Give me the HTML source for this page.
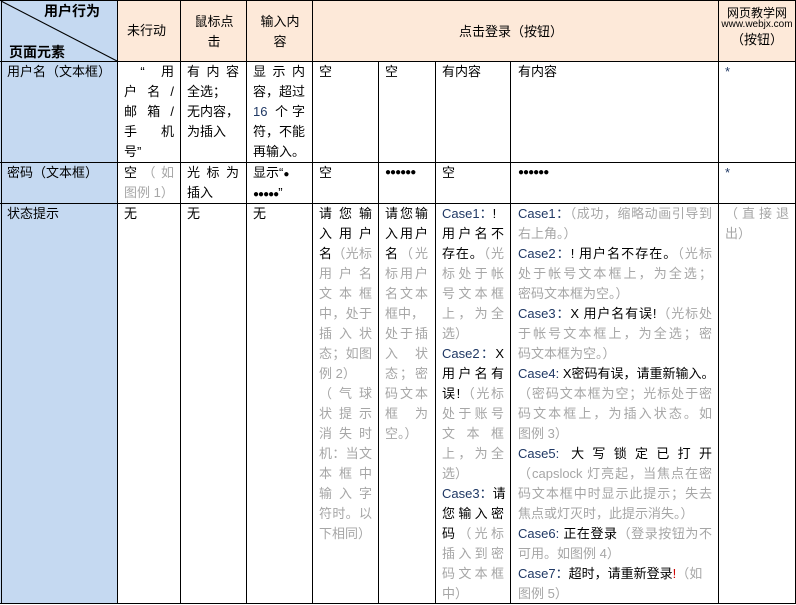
<!DOCTYPE html>
<html><head><meta charset="utf-8"><style>
*{margin:0;padding:0;box-sizing:border-box}
body{width:796px;height:605px;background:#fff;position:relative;overflow:hidden;font-family:"Liberation Sans","Noto Sans CJK SC","WenQuanYi Zen Hei",sans-serif;font-size:13px;color:#000}
.bg{position:absolute}
.h{position:absolute;background:#000}
.c{position:absolute;line-height:20px}
.c div{white-space:nowrap;height:20px}
.j{text-align:justify;text-align-last:justify}
.g{color:#a6a6a6}
.b{color:#1f3864}
.d{font-size:10px;letter-spacing:-1px}
</style></head><body>
<div class="bg" style="left:0;top:0;width:796px;height:61px;background:#fde9d9"></div>
<div class="bg" style="left:0;top:0;width:117px;height:604px;background:#c5d9f1"></div>
<svg style="position:absolute;left:0;top:0" width="118" height="62"><line x1="1" y1="1" x2="117" y2="61" stroke="#000" stroke-width="1"/></svg>
<div class="h" style="left:0;top:0;width:796px;height:1px"></div>
<div class="h" style="left:0;top:61px;width:796px;height:1px"></div>
<div class="h" style="left:0;top:162px;width:796px;height:1px"></div>
<div class="h" style="left:0;top:203px;width:796px;height:1px"></div>
<div class="h" style="left:0;top:603px;width:796px;height:1px"></div>
<div class="h" style="left:1px;top:0;width:1px;height:604px"></div>
<div class="h" style="left:117px;top:0;width:1px;height:604px"></div>
<div class="h" style="left:180px;top:0;width:1px;height:604px"></div>
<div class="h" style="left:246px;top:0;width:1px;height:604px"></div>
<div class="h" style="left:312px;top:0;width:1px;height:604px"></div>
<div class="h" style="left:378px;top:61px;width:1px;height:543px"></div>
<div class="h" style="left:435px;top:61px;width:1px;height:543px"></div>
<div class="h" style="left:510px;top:61px;width:1px;height:543px"></div>
<div class="h" style="left:718px;top:0;width:1px;height:604px"></div>
<div class="h" style="left:795px;top:0;width:1px;height:604px"></div>

<div class="c" style="left:44px;top:1px;font-weight:bold;font-size:14px">用户行为</div>
<div class="c" style="left:9px;top:42px;font-weight:bold;font-size:14px">页面元素</div>
<div class="c" style="left:127px;top:21px">未行动</div>
<div class="c" style="left:193px;top:12px;text-align:center;width:42px"><div>鼠标点</div><div>击</div></div>
<div class="c" style="left:259px;top:12px;text-align:center;width:42px"><div>输入内</div><div>容</div></div>
<div class="c" style="left:459px;top:22px">点击登录（按钮）</div>
<div class="c" style="left:719px;top:8px;width:76px;text-align:center;font-size:12px;line-height:11px"><div style="height:11px">网页教学网</div><div style="height:11px;font-size:10px">www.webjx.com</div></div>
<div class="c" style="left:719px;top:30px;width:76px;text-align:center">（按钮）</div>

<div class="c" style="left:7px;top:62px">用户名（文本框）</div>
<div class="c" style="left:124px;top:62px;width:50px"><div class="j">&nbsp;“&nbsp;用</div><div class="j">户 名 /</div><div class="j">邮 箱 /</div><div class="j">手 机</div><div>号”</div></div>
<div class="c" style="left:187px;top:62px;width:52px"><div class="j">有内容</div><div>全选；</div><div>无内容，</div><div>为插入</div></div>
<div class="c" style="left:253px;top:62px;width:52px"><div class="j">显示内</div><div class="j">容，超过</div><div class="j"><span class="b">16</span> 个字</div><div class="j">符，不能</div><div>再输入。</div></div>
<div class="c" style="left:319px;top:62px">空</div>
<div class="c" style="left:385px;top:62px">空</div>
<div class="c" style="left:442px;top:62px">有内容</div>
<div class="c" style="left:518px;top:62px">有内容</div>
<div class="c b" style="left:725px;top:62px">*</div>

<div class="c" style="left:7px;top:163px">密码（文本框）</div>
<div class="c" style="left:124px;top:163px;width:50px"><div class="j">空<span class="g">（如</span></div><div class="g">图例 1）</div></div>
<div class="c" style="left:187px;top:163px;width:52px"><div class="j">光标为</div><div>插入</div></div>
<div class="c" style="left:253px;top:163px;width:52px"><div>显示“<span class="d">●</span></div><div><span class="d">●●●●●</span>”</div></div>
<div class="c" style="left:319px;top:163px">空</div>
<div class="c d" style="left:385px;top:163px">●●●●●●</div>
<div class="c" style="left:442px;top:163px">空</div>
<div class="c d" style="left:518px;top:163px">●●●●●●</div>
<div class="c b" style="left:725px;top:163px">*</div>

<div class="c" style="left:7px;top:204px">状态提示</div>
<div class="c" style="left:124px;top:204px">无</div>
<div class="c" style="left:187px;top:204px">无</div>
<div class="c" style="left:253px;top:204px">无</div>
<div class="c" style="left:319px;top:204px;width:53px">
<div class="j">请您输</div><div class="j">入用户</div><div class="j">名<span class="g">（光标</span></div>
<div class="j g">用户名</div><div class="j g">文本框</div><div class="j g">中，处于</div><div class="j g">插入状</div><div class="j g">态；如图</div><div class="g">例 2）</div>
<div class="j g">（气球</div><div class="j g">状提示</div><div class="j g">消失时</div><div class="j g">机：当文</div><div class="j g">本框中</div><div class="j g">输入字</div><div class="j g">符时。以</div><div class="g">下相同）</div></div>
<div class="c" style="left:385px;top:204px;width:43px">
<div class="j">请您输</div><div class="j">入用户</div><div class="j">名<span class="g">（光</span></div>
<div class="j g">标用户</div><div class="j g">名文本</div><div class="g">框中，</div><div class="j g">处于插</div><div class="j g">入 状</div><div class="j g">态；密</div><div class="j g">码文本</div><div class="j g">框 为</div><div class="g">空。）</div></div>
<div class="c" style="left:442px;top:204px;width:62px">
<div><span class="b">Case1：</span>!</div><div class="j">用户名不</div><div class="j">存在。<span class="g">（光</span></div>
<div class="j g">标处于帐</div><div class="j g">号文本框</div><div class="j g">上，为全</div><div class="g">选）</div>
<div class="j"><span class="b">Case2：</span>X</div><div class="j">用户名有</div><div class="j">误!<span class="g">（光标</span></div>
<div class="j g">处于账号</div><div class="j g">文本框</div><div class="j g">上，为全</div><div class="g">选）</div>
<div class="j"><span class="b">Case3：</span>请</div><div class="j">您输入密</div><div class="j">码<span class="g">（光标</span></div>
<div class="j g">插入到密</div><div class="j g">码文本框</div><div class="g">中）</div></div>
<div class="c" style="left:518px;top:204px;width:194px">
<div class="j"><span class="b">Case1：</span><span class="g">（成功，缩略动画引导到</span></div><div class="g">右上角。）</div>
<div class="j"><span class="b">Case2：</span>! 用户名不存在。<span class="g">（光标</span></div>
<div class="j g">处于帐号文本框上，为全选；</div><div class="g">密码文本框为空。）</div>
<div class="j"><span class="b">Case3：</span>X 用户名有误!<span class="g">（光标处</span></div>
<div class="j g">于帐号文本框上，为全选；密</div><div class="g">码文本框为空。）</div>
<div class="j"><span class="b">Case4:</span> X密码有误，请重新输入。</div>
<div class="j g">（密码文本框为空；光标处于密</div><div class="j g">码文本框上，为插入状态。如</div><div class="g">图例 3）</div>
<div class="j"><span class="b">Case5:</span> 大写锁定已打开</div>
<div class="j g">（capslock 灯亮起，当焦点在密</div><div class="j g">码文本框中时显示此提示；失去</div><div class="g">焦点或灯灭时，此提示消失。）</div>
<div class="j"><span class="b">Case6:</span> 正在登录<span class="g">（登录按钮为不</span></div><div class="g">可用。如图例 4）</div>
<div><span class="b">Case7：</span>超时，请重新登录<span style="color:#c00">!</span><span class="g">（如</span></div><div class="g">图例 5）</div></div>
<div class="c g" style="left:725px;top:204px;width:64px"><div class="j">（直接退</div><div>出）</div></div>
</body></html>
